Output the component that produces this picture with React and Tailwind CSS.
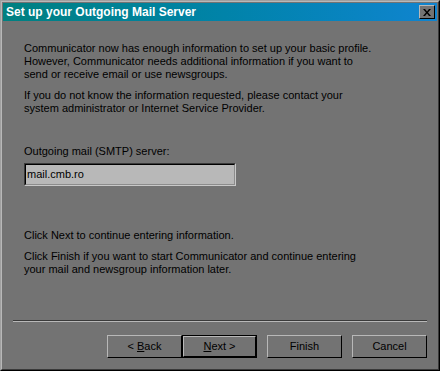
import React from 'react';

function Btn({ children, isDefault }) {
  return (
    <button
      className={
        isDefault
          ? 'w-[75px] h-[23px] border border-black bg-[#737373] p-0'
          : 'w-[75px] h-[23px] bg-[#737373] p-0'
      }
    >
      <div className="w-full h-full border border-t-[#b8b8b8] border-l-[#b8b8b8] border-r-black border-b-black flex items-center justify-center text-black text-[11px]">
        <span>{children}</span>
      </div>
    </button>
  );
}

export default function App() {
  return (
    <div className="w-[440px] h-[371px] bg-[#737373] border border-t-[#a0a0a0] border-l-[#a0a0a0] border-r-black border-b-black font-['Liberation_Sans',Arial,sans-serif] overflow-hidden">
      <div className="w-full h-full border border-t-[#b8b8b8] border-l-[#b8b8b8] border-r-[#3a3a3a] border-b-[#3a3a3a] p-[1px] flex flex-col">
        {/* Title bar */}
        <div className="h-[18px] flex items-center justify-between pl-[3px] pr-[2px] bg-gradient-to-r from-[#008080] to-[#1084d0]">
          <span className="text-white font-bold text-[12px]">Set up your Outgoing Mail Server</span>
          <div className="w-[16px] h-[14px] bg-[#737373] border border-t-[#b8b8b8] border-l-[#b8b8b8] border-r-black border-b-black flex items-center justify-center">
            <svg width="8" height="7" viewBox="0 0 8 7">
              <path d="M0 0h2l2 2.5L6 0h2L5 3.5 8 7H6L4 4.5 2 7H0l3-3.5z" fill="#000" />
            </svg>
          </div>
        </div>

        {/* Body */}
        <div className="flex-1 flex flex-col px-[21px] pt-[21px] text-black text-[11px] leading-[13px]">
          <p>
            Communicator now has enough information to set up your basic profile.
            <br />
            However, Communicator needs additional information if you want to
            <br />
            send or receive email or use newsgroups.
          </p>
          <p className="mt-[8px]">
            If you do not know the information requested, please contact your
            <br />
            system administrator or Internet Service Provider.
          </p>

          <p className="mt-[30px]">Outgoing mail (SMTP) server:</p>
          <div className="mt-[5px] w-[212px] h-[23px] border border-t-[#3a3a3a] border-l-[#3a3a3a] border-r-[#c8c8c8] border-b-[#c8c8c8]">
            <div className="w-full h-full border border-t-black border-l-black border-r-[#8c8c8c] border-b-[#8c8c8c] bg-[#b8b8b8] px-[1px] flex items-center">
              mail.cmb.ro
            </div>
          </div>

          <p className="mt-[43px]">Click Next to continue entering information.</p>
          <p className="mt-[8px]">
            Click Finish if you want to start Communicator and continue entering
            <br />
            your mail and newsgroup information later.
          </p>
        </div>

        {/* Separator */}
        <div className="mx-[10px] border-t border-t-[#3a3a3a] border-b border-b-[#b8b8b8]" />

        {/* Buttons */}
        <div className="flex justify-end items-center pr-[10px] pt-[13px] pb-[10px]">
          <Btn>
            &lt; <u>B</u>ack
          </Btn>
          <Btn isDefault>
            <u>N</u>ext &gt;
          </Btn>
          <div className="w-[10px]" />
          <Btn>Finish</Btn>
          <div className="w-[10px]" />
          <Btn>Cancel</Btn>
        </div>
      </div>
    </div>
  );
}
